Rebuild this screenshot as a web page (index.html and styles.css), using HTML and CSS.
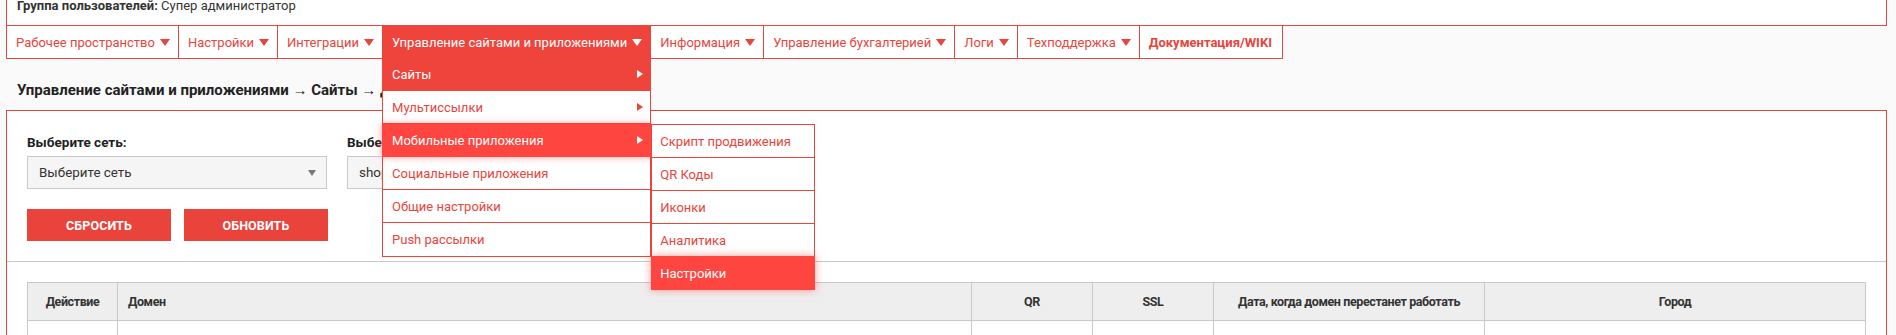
FILE: index.html
```html
<!DOCTYPE html>
<html lang="ru">
<head>
<meta charset="utf-8">
<title>Управление сайтами и приложениями</title>
<link rel="stylesheet" href="styles.css">
</head>
<body>
<div class="page">
  <header class="topbar">
    <div class="usergroup"><b>Группа пользователей:</b> Супер администратор</div>
  </header>
  <nav class="mainnav">
    <ul class="menu">
      <li class="menu-item first"><a class="menu-link">Рабочее пространство<span class="caret"></span></a></li>
      <li class="menu-item"><a class="menu-link">Настройки<span class="caret"></span></a></li>
      <li class="menu-item"><a class="menu-link">Интеграции<span class="caret"></span></a></li>
      <li class="menu-item active"><a class="menu-link">Управление сайтами и приложениями<span class="caret"></span></a>
        <ul class="dropdown">
          <li class="dd-item current"><a class="dd-link">Сайты<span class="arrow"></span></a></li>
          <li class="dd-item"><a class="dd-link">Мультиссылки<span class="arrow"></span></a></li>
          <li class="dd-item hover"><a class="dd-link">Мобильные приложения<span class="arrow"></span></a>
            <ul class="submenu">
              <li class="sub-item"><a class="dd-link">Скрипт продвижения</a></li>
              <li class="sub-item"><a class="dd-link">QR Коды</a></li>
              <li class="sub-item"><a class="dd-link">Иконки</a></li>
              <li class="sub-item"><a class="dd-link">Аналитика</a></li>
              <li class="sub-item hover"><a class="dd-link">Настройки</a></li>
            </ul>
          </li>
          <li class="dd-item"><a class="dd-link">Социальные приложения</a></li>
          <li class="dd-item"><a class="dd-link">Общие настройки</a></li>
          <li class="dd-item"><a class="dd-link">Push рассылки</a></li>
        </ul>
      </li>
      <li class="menu-item"><a class="menu-link">Информация<span class="caret"></span></a></li>
      <li class="menu-item"><a class="menu-link">Управление бухгалтерией<span class="caret"></span></a></li>
      <li class="menu-item"><a class="menu-link">Логи<span class="caret"></span></a></li>
      <li class="menu-item"><a class="menu-link">Техподдержка<span class="caret"></span></a></li>
      <li class="menu-item"><a class="menu-link strong">Документация/WIKI</a></li>
    </ul>
  </nav>

  <h1 class="crumbs">Управление сайтами и приложениями → Сайты → Домены</h1>

  <section class="panel">
    <div class="filters">
      <div class="filter-row">
        <div class="field">
          <label class="field-label">Выберите сеть:</label>
          <div class="select"><span class="select-text">Выберите сеть</span><span class="select-caret"></span></div>
        </div>
        <div class="field">
          <label class="field-label">Выберите сайт:</label>
          <div class="select"><span class="select-text">shop</span><span class="select-caret"></span></div>
        </div>
      </div>
      <div class="buttons">
        <button class="btn">Сбросить</button>
        <button class="btn">Обновить</button>
      </div>
    </div>
    <div class="table-wrap">
      <table class="grid">
        <thead>
          <tr>
            <th class="col-action">Действие</th>
            <th class="col-domain">Домен</th>
            <th class="col-qr">QR</th>
            <th class="col-ssl">SSL</th>
            <th class="col-date">Дата, когда домен перестанет работать</th>
            <th class="col-city">Город</th>
          </tr>
        </thead>
        <tbody>
          <tr><td></td><td></td><td></td><td></td><td></td><td></td></tr>
        </tbody>
      </table>
    </div>
  </section>
</div>
</body>
</html>
```
FILE: styles.css
```css
* { box-sizing: border-box; }
html, body { margin: 0; padding: 0; }
body {
  background: #fafafa;
  font-family: Roboto, "Noto Sans", "Liberation Sans", sans-serif;
  font-size: 13px;
  color: #333;
}
ul { list-style: none; margin: 0; padding: 0; }

.page {
  margin: 0 9px 0 6px;
}

/* top bar */
.topbar {
  background: #fff;
  border: 1px solid #e8453c;
  border-top: none;
  height: 26px;
  padding: 0 10px;
}
.usergroup {
  line-height: 12px;
  font-size: 13px;
  color: #333;
}
.usergroup b { font-weight: 700; }

/* main nav */
.mainnav { display: flex; }
.menu { display: flex; }
.menu-item {
  position: relative;
  background: #fff;
  border-right: 1px solid #e8453c;
  border-bottom: 1px solid #e8453c;
  height: 33px;
}
.menu-item.first { border-left: 1px solid #e8453c; }
.menu-link {
  display: flex;
  align-items: center;
  height: 32px;
  padding: 0 8px 0 9px;
  color: #e8453c;
  font-size: 13px;
  white-space: nowrap;
}
.menu-link.strong { font-weight: 700; padding-right: 10px; }
.caret {
  display: inline-block;
  margin-left: 5px;
  width: 0; height: 0;
  border-left: 5.5px solid transparent;
  border-right: 5.5px solid transparent;
  border-top: 7px solid #e8453c;
}
.menu-item.active { background: #ee443c; margin-top: -1px; height: 34px; border-bottom-color: #ee443c; }
.menu-item.active .menu-link { color: #fff; height: 33px; padding-top: 1px; }
.menu-item.active .caret { border-top-color: #fff; }

/* dropdown */
.dropdown {
  position: absolute;
  left: -1px;
  right: -1px;
  top: 33px;
  z-index: 10;
  background: #fff;
  border-left: 1px solid #e8453c;
  border-right: 1px solid #e8453c;
}
.dd-item {
  position: relative;
  height: 33px;
  border-bottom: 1px solid #e8453c;
}
.dd-link {
  display: flex;
  align-items: center;
  justify-content: space-between;
  height: 32px;
  padding: 0 7px 0 9px;
  color: #e8453c;
  font-size: 13px;
  white-space: nowrap;
}
.arrow {
  width: 0; height: 0;
  border-top: 4px solid transparent;
  border-bottom: 4px solid transparent;
  border-left: 6px solid #e8453c;
}
.dd-item.current { background: #ee443c; border-bottom-color: #ee443c; margin: 0 -1px; }
.dd-item.current .dd-link { color: #fff; padding-left: 10px; padding-right: 8px; }
.dd-item.current .arrow { border-left-color: #fff; }
.dd-item.hover {
  background: #ff4540;
  border-bottom-color: #ff4540;
  margin: 0 -1px;
  box-shadow: 0 0 7px rgba(255, 69, 64, 0.55);
  z-index: 2;
}
.dd-item.hover > .dd-link { color: #fff; padding-left: 10px; padding-right: 8px; }
.dd-item.hover .arrow { border-left-color: #fff; }
.dropdown > .dd-item:last-child { height: 34px; }

/* submenu */
.submenu {
  position: absolute;
  left: 100%;
  top: 0;
  width: 164px;
  background: #fff;
  border: 1px solid #e8453c;
  border-bottom: none;
}
.sub-item {
  height: 33px;
  border-bottom: 1px solid #e8453c;
}
.sub-item .dd-link { padding-left: 8px; height: 32px; }
.sub-item.hover {
  background: #ff4540;
  border-bottom-color: #ff4540;
  margin: -1px -1px 0;
  height: 34px;
  box-shadow: 0 0 8px rgba(255, 69, 64, 0.55);
}
.sub-item.hover .dd-link { color: #fff; padding-left: 9px; height: 34px; }

/* breadcrumbs */
.crumbs {
  margin: 21px 0 10px 11px;
  font-size: 15px;
  line-height: 20px;
  font-weight: 700;
  color: #222;
}

/* panel */
.panel {
  background: #fff;
  border: 1px solid #e8453c;
  border-bottom: none;
}
.filters {
  padding: 22px 20px 20px;
  border-bottom: 1px solid #c8c8c8;
}
.filter-row { display: flex; gap: 20px; }
.field { width: 300px; }
.field-label {
  display: block;
  font-weight: 700;
  font-size: 13.5px;
  line-height: 18px;
  color: #222;
  margin-bottom: 5px;
}
.select {
  display: flex;
  align-items: center;
  justify-content: space-between;
  height: 33px;
  padding: 0 10px 0 11px;
  background: #f5f5f5;
  border: 1px solid #c8c8c8;
  font-size: 13.4px;
  color: #333;
}
.select-caret {
  width: 0; height: 0;
  border-left: 4px solid transparent;
  border-right: 4px solid transparent;
  border-top: 6px solid #777;
}
.buttons { display: flex; gap: 13px; margin-top: 20px; }
.btn {
  width: 144px;
  height: 32px;
  border: none;
  background: #ea433b;
  color: #fff;
  font-family: inherit;
  font-weight: 700;
  font-size: 12.5px;
  text-transform: uppercase;
  letter-spacing: 0.1px;
}

/* table */
.table-wrap { padding: 20px 20px 0; }
.grid {
  width: 100%;
  border-collapse: collapse;
  table-layout: fixed;
  font-family: Roboto, "Noto Sans", sans-serif;
}
.grid th {
  background: #eee;
  border: 1px solid #c8c8c8;
  height: 38px;
  font-weight: 700;
  font-size: 12.5px;
  letter-spacing: -0.4px;
  color: #333;
  text-align: center;
  white-space: nowrap;
  padding: 0 4px;
}
.grid th.col-domain { text-align: left; padding-left: 10px; }
.grid td {
  border: 1px solid #c8c8c8;
  height: 40px;
}
.col-action { width: 90px; }
.col-domain { width: auto; }
.col-qr { width: 121px; }
.col-ssl { width: 121px; }
.col-date { width: 271px; }
.col-city { width: 381px; }
```
